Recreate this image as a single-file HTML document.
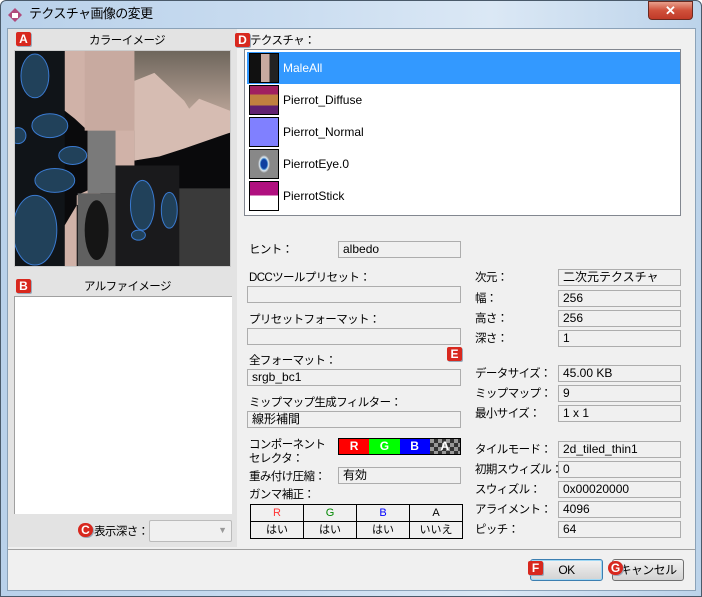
<!DOCTYPE html>
<html><head><meta charset="utf-8"><style>
*{box-sizing:border-box;margin:0;padding:0}
body{width:702px;height:597px;overflow:hidden;background:#fff;font-family:"Liberation Sans","Noto Sans CJK JP",sans-serif;font-size:12px;color:#000;position:relative}
.a{position:absolute}
.frame{left:0;top:0;width:702px;height:597px;background:linear-gradient(90deg,#b9d1ea,#c9dcf0 40%,#dbe8f5 70%,#bcd3ea);border:1px solid #4a5a6a;border-radius:6px 6px 0 0}
.content{left:7px;top:28px;width:689px;height:563px;background:#f0f0f0;border:1px solid #8ba2b8}
.lbl{position:absolute;white-space:nowrap;line-height:14px;font-size:11.5px;letter-spacing:-0.6px}
.fld{position:absolute;border:1px solid #adadad;background:#f0f0f0;height:17px;padding-left:4px;line-height:15px;white-space:nowrap}
.badge{position:absolute;width:15px;height:14px;background:#d8281e;color:#fff;font-weight:bold;font-size:12px;line-height:14px;text-align:center;border-radius:2px;box-shadow:1px 1px 0 #9ab}
.row{position:absolute;left:2px;width:433px;height:32px}
.th{position:absolute;left:2px;top:1px;width:30px;height:30px;border:1px solid #000}
.rt{position:absolute;left:36px;top:9px}
.btn{position:absolute;height:22px;border:1px solid #707070;border-radius:3px;background:linear-gradient(#f2f2f2,#e2e2e2 50%,#d3d3d3);text-align:center;line-height:20px;letter-spacing:-0.6px}
table{border-collapse:collapse}
td{border:1px solid #000;width:53px;height:17px;text-align:center;font-size:11px;line-height:15px}
</style></head><body>
<div class="a frame"></div>
<svg class="a" style="left:8px;top:8px" width="14" height="14"><polygon points="7,0 14,7 7,14 0,7" fill="#b04a7c"/><rect x="4" y="5" width="6" height="5" fill="#fff"/></svg>
<div class="lbl" style="left:29px;top:7px;font-size:13px">テクスチャ画像の変更</div>
<div class="a" style="left:648px;top:1px;width:45px;height:19px;border:1px solid #6b2a20;border-radius:0 0 4px 4px;background:linear-gradient(#e8a08c,#d0503a 50%,#c03a28);color:#fff;font-weight:bold;text-align:center;line-height:17px;font-size:13px">✕</div>
<div class="a content"></div>
<div class="a" style="left:8px;top:29px;width:229px;height:518px;background:#e3e3e3"></div>
<div class="a" style="left:8px;top:549px;width:687px;height:1px;background:#a0a0a0"></div>
<div class="lbl" style="left:89px;top:34px">カラーイメージ</div>
<svg class="a" style="left:14px;top:50px;border:1px solid #ccc" width="217" height="217" viewBox="0 0 216 216">
<defs><linearGradient id="g" x1="0" y1="0" x2="0" y2="1"><stop offset="0" stop-color="#6e665c"/><stop offset=".5" stop-color="#b09c90"/><stop offset="1" stop-color="#d8bdb3"/></linearGradient></defs>
<rect width="216" height="216" fill="#0a0a0c"/>
<rect x="0" y="0" width="50" height="216" fill="#101418"/>
<polygon points="50,0 120,0 120,115 100,115 100,130 78,150 62,155 50,175 50,216 62,216 62,145 73,140 73,80 60,68 50,60" fill="#d0b2a8"/>
<rect x="70" y="0" width="50" height="80" fill="#c8aaa0"/>
<polygon points="120,0 216,0 216,82 170,95 145,105 120,110" fill="url(#g)"/>
<polygon points="120,30 140,22 170,50 175,58 185,48 216,60 216,82 170,98 145,106 120,110" fill="#d6bcb2"/>
<rect x="73" y="80" width="28" height="63" fill="#7a7a7a"/>
<rect x="63" y="143" width="38" height="73" fill="#606060"/>
<ellipse cx="82" cy="180" rx="12" ry="30" fill="#151515"/>
<rect x="101" y="115" width="64" height="101" fill="#1a1a1c"/>
<rect x="165" y="138" width="51" height="78" fill="#3a3a3a"/>
<g fill="#21415a" stroke="#3a7ad0" stroke-width="1">
<ellipse cx="20" cy="25" rx="14" ry="22"/><ellipse cx="35" cy="75" rx="18" ry="12"/><ellipse cx="58" cy="105" rx="14" ry="9"/><ellipse cx="40" cy="130" rx="20" ry="12"/><ellipse cx="20" cy="180" rx="22" ry="35"/><ellipse cx="3" cy="85" rx="8" ry="8"/>
<ellipse cx="128" cy="155" rx="12" ry="25"/><ellipse cx="155" cy="160" rx="8" ry="18"/><ellipse cx="124" cy="185" rx="7" ry="5"/></g>
</svg>
<div class="badge" style="left:16px;top:32px">A</div>
<div class="lbl" style="left:84px;top:280px">アルファイメージ</div>
<div class="a" style="left:14px;top:296px;width:218px;height:218px;background:#fff;border:1px solid #a0a0a0;border-right:none;border-bottom:none"></div>
<div class="badge" style="left:16px;top:279px">B</div>
<div class="badge" style="left:78px;top:523px;border-radius:8px">C</div>
<div class="lbl" style="left:94px;top:525px">表示深さ：</div>
<div class="a" style="left:149px;top:520px;width:83px;height:22px;border:1px solid #bbb;background:#f0f0f0;border-radius:2px"><span style="position:absolute;right:4px;top:4px;color:#999;font-size:9px">▼</span></div>

<div class="badge" style="left:235px;top:33px">D</div>
<div class="lbl" style="left:250px;top:34px">テクスチャ：</div>
<div class="a" style="left:244px;top:49px;width:437px;height:167px;background:#fff;border:1px solid #828790">
<div class="row" style="top:2px;background:#3399ff;color:#fff"><div class="th" style="background:linear-gradient(90deg,#111 0 40%,#c8aaa0 40% 70%,#222 70%)"></div><div class="rt">MaleAll</div></div>
<div class="row" style="top:34px"><div class="th" style="background:linear-gradient(#a02060 0 30%,#c08040 30% 70%,#602070 70%);"></div><div class="rt">Pierrot_Diffuse</div></div>
<div class="row" style="top:66px"><div class="th" style="background:#8080ff"></div><div class="rt">Pierrot_Normal</div></div>
<div class="row" style="top:98px"><div class="th" style="background:radial-gradient(ellipse 6px 9px,#1040a0 50%,#4a90d0 60%,#dfe8f0 75%,#888 100%)"></div><div class="rt">PierrotEye.0</div></div>
<div class="row" style="top:130px"><div class="th" style="background:linear-gradient(#b0107f 0 48%,#fff 48%)"></div><div class="rt">PierrotStick</div></div>
</div>

<div class="lbl" style="left:249px;top:243px">ヒント：</div><div class="fld" style="left:338px;top:241px;width:123px">albedo</div>
<div class="lbl" style="left:249px;top:271px">DCCツールプリセット：</div><div class="fld" style="left:247px;top:286px;width:214px"></div>
<div class="lbl" style="left:249px;top:313px">プリセットフォーマット：</div><div class="fld" style="left:247px;top:328px;width:214px"></div>
<div class="lbl" style="left:249px;top:354px">全フォーマット：</div><div class="fld" style="left:247px;top:369px;width:214px">srgb_bc1</div>
<div class="badge" style="left:447px;top:347px">E</div>
<div class="lbl" style="left:249px;top:396px">ミップマップ生成フィルター：</div><div class="fld" style="left:247px;top:411px;width:214px">線形補間</div>
<div class="lbl" style="left:249px;top:438px">コンポーネント<br>セレクタ：</div>
<div class="a" style="left:338px;top:438px;width:123px;height:17px;border:1px solid #000;display:flex;color:#fff;font-weight:bold;text-align:center;line-height:15px">
<div style="flex:1;background:#f00">R</div><div style="flex:1;background:#0f0">G</div><div style="flex:1;background:#00f">B</div><div style="flex:1;background:repeating-conic-gradient(#333 0 25%,#999 0 50%) 0 0/8px 8px">A</div></div>
<div class="lbl" style="left:249px;top:470px">重み付け圧縮：</div><div class="fld" style="left:338px;top:467px;width:123px">有効</div>
<div class="lbl" style="left:249px;top:488px">ガンマ補正：</div>
<table class="a" style="left:250px;top:504px"><tr><td style="color:#f33">R</td><td style="color:#080">G</td><td style="color:#00f">B</td><td>A</td></tr><tr><td>はい</td><td>はい</td><td>はい</td><td>いいえ</td></tr></table>

<div class="lbl" style="left:475px;top:271px">次元：</div><div class="fld" style="left:558px;top:269px;width:123px">二次元テクスチャ</div>
<div class="lbl" style="left:475px;top:292px">幅：</div><div class="fld" style="left:558px;top:290px;width:123px">256</div>
<div class="lbl" style="left:475px;top:312px">高さ：</div><div class="fld" style="left:558px;top:310px;width:123px">256</div>
<div class="lbl" style="left:475px;top:332px">深さ：</div><div class="fld" style="left:558px;top:330px;width:123px">1</div>
<div class="lbl" style="left:475px;top:367px">データサイズ：</div><div class="fld" style="left:558px;top:365px;width:123px">45.00 KB</div>
<div class="lbl" style="left:475px;top:387px">ミップマップ：</div><div class="fld" style="left:558px;top:385px;width:123px">9</div>
<div class="lbl" style="left:475px;top:407px">最小サイズ：</div><div class="fld" style="left:558px;top:405px;width:123px">1 x 1</div>
<div class="lbl" style="left:475px;top:443px">タイルモード：</div><div class="fld" style="left:558px;top:441px;width:123px">2d_tiled_thin1</div>
<div class="lbl" style="left:475px;top:463px">初期スウィズル：</div><div class="fld" style="left:558px;top:461px;width:123px">0</div>
<div class="lbl" style="left:475px;top:483px">スウィズル：</div><div class="fld" style="left:558px;top:481px;width:123px">0x00020000</div>
<div class="lbl" style="left:475px;top:503px">アライメント：</div><div class="fld" style="left:558px;top:501px;width:123px">4096</div>
<div class="lbl" style="left:475px;top:523px">ピッチ：</div><div class="fld" style="left:558px;top:521px;width:123px">64</div>

<div class="btn" style="left:530px;top:559px;width:73px;border-color:#3c7fb1;box-shadow:inset 0 0 0 1px #9fd8f5">OK</div>
<div class="btn" style="left:612px;top:559px;width:72px">キャンセル</div>
<div class="badge" style="left:528px;top:561px">F</div>
<div class="badge" style="left:608px;top:561px;border-radius:8px">G</div>
</body></html>
